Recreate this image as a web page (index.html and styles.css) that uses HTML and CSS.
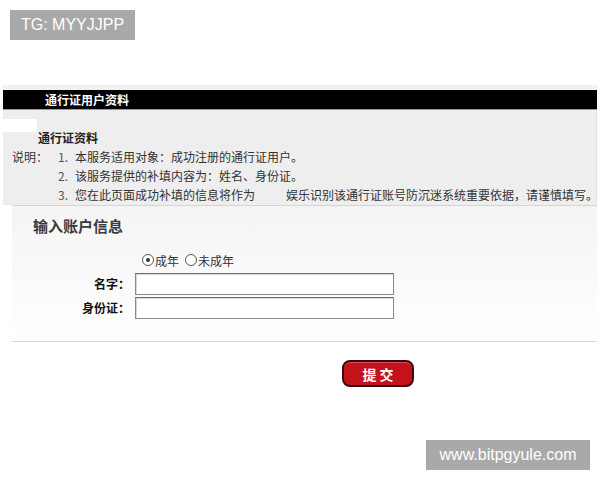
FILE: index.html
```html
<!DOCTYPE html>
<html lang="zh">
<head>
<meta charset="utf-8">
<title>通行证用户资料</title>
<link rel="stylesheet" href="styles.css">
</head>
<body>
<div class="badge badge-tl">TG: MYYJJPP</div>
<div class="page">
  <div class="panel">
    <div class="strip"></div>
    <div class="titlebar">通行证用户资料</div>
    <div class="info">
      <div class="notch"></div>
      <div class="info-title">通行证资料</div>
      <div class="desc">
        <span class="desc-label">说明<span class="colon">：</span></span>
        <span class="num">1.</span>
        <span class="line">本服务适用对象<span class="colon">：</span>成功注册的通行证用户。</span>
        <span></span>
        <span class="num">2.</span>
        <span class="line">该服务提供的补填内容为<span class="colon">：</span>姓名、身份证。</span>
        <span></span>
        <span class="num">3.</span>
        <span class="line">您在此页面成功补填的信息将作为<span class="blank"></span>娱乐识别该通行证账号防沉迷系统重要依据<span class="colon">，</span>请谨慎填写。</span>
      </div>
    </div>
    <div class="account">
      <div class="account-title">输入账户信息</div>
      <div class="radios">
        <span class="radio checked"></span><span class="radio-text">成年</span>
        <span class="radio"></span><span class="radio-text">未成年</span>
      </div>
      <div class="form">
        <span class="label">名字<span class="colon">：</span></span>
        <span class="input"></span>
        <span class="label">身份证<span class="colon">：</span></span>
        <span class="input"></span>
      </div>
    </div>
    <div class="actions">
      <span class="submit">提 交</span>
    </div>
  </div>
</div>
<div class="badge badge-br">www.bitpgyule.com</div>
</body>
</html>
```
FILE: styles.css
```css
* { box-sizing: border-box; }
html, body { margin: 0; padding: 0; }
body {
  width: 600px;
  height: 480px;
  background: #fff;
  font-family: "Noto Sans CJK SC", "Liberation Sans", sans-serif;
  color: #3a3a3a;
  position: relative;
  overflow: hidden;
}
.badge {
  position: absolute;
  background: #a9a9a9;
  color: #fff;
  font-family: "Liberation Sans", Arial, sans-serif;
  font-size: 16px;
  height: 30px;
  line-height: 30px;
  text-align: center;
}
.badge-tl { left: 10px; top: 10px; width: 125px; }
.badge-br { left: 426px; top: 440px; width: 164px; }

.page { padding-top: 85px; padding-left: 3px; }
.panel { width: 594px; }
.strip { height: 5px; background: #f1f1f1; }
.titlebar {
  height: 20px;
  background: #000;
  border-bottom: 1px solid #9a9a9a;
  color: #fff;
  font-size: 12px;
  font-weight: bold;
  line-height: 19px;
  padding-left: 42px;
}
.info {
  height: 95px;
  padding-top: 9px;
  background: #eeeeee;
  border-right: 1px solid #e2e2e2;
}
.notch {
  width: 37px;
  height: 13px;
  margin-left: -3px;
  background: #fff;
}
.info-title {
  margin-top: -4px;
  padding-left: 35px;
  font-size: 12px;
  font-weight: bold;
  line-height: 19px;
  color: #222;
}
.colon { font-family: "Noto Sans CJK TC", sans-serif; }
.desc {
  display: grid;
  grid-template-columns: 46px 17px auto;
  padding-left: 9px;
  font-size: 12px;
  line-height: 19px;
  color: #333;
}
.desc .num { color: #555; }
.desc .line { white-space: nowrap; }
.blank { display: inline-block; width: 31px; }

.account {
  margin-left: 9px;
  border-top: 1px solid #d4d4d4;
  background: linear-gradient(#f4f4f4, #ffffff 135px);
  height: 136px;
}
.account-title {
  padding-top: 10px;
  padding-left: 21px;
  font-size: 15px;
  line-height: 20px;
  font-weight: bold;
  color: #3c3c3c;
}
.radios {
  margin-top: 14px;
  margin-left: 130px;
  height: 20px;
  display: flex;
  align-items: center;
  font-size: 12px;
  color: #333;
}
.radio {
  width: 12px;
  height: 12px;
  border: 1px solid #555;
  border-radius: 50%;
  background: #fff;
  display: inline-flex;
  align-items: center;
  justify-content: center;
}
.radio.checked::after {
  content: "";
  width: 4px;
  height: 4px;
  border-radius: 50%;
  background: #333;
}
.radio-text { margin-left: 1px; margin-right: 6px; }
.form {
  margin-top: 3px;
  display: grid;
  grid-template-columns: 118px 259px;
  column-gap: 5px;
  row-gap: 2px;
}
.label {
  text-align: right;
  font-size: 12px;
  font-weight: bold;
  line-height: 22px;
  color: #111;
}
.input {
  height: 22px;
  border: 1px solid #8a8a8a;
  border-top-color: #6f6f6f;
  background: #fff;
  box-shadow: inset 1px 1px 0 #d8d8d8;
}
.actions {
  margin-left: 9px;
  border-top: 1px solid #d6d6d6;
  padding-top: 18px;
  padding-left: 330px;
}
.submit {
  display: flex;
  align-items: center;
  justify-content: center;
  width: 72px;
  height: 27px;
  background: #c3121b;
  border: 2px solid #3a0a0a;
  border-radius: 8px;
  color: #fff;
  font-size: 14px;
  font-weight: bold;
  box-shadow: inset 0 1px 0 #e04a50;
}
```
